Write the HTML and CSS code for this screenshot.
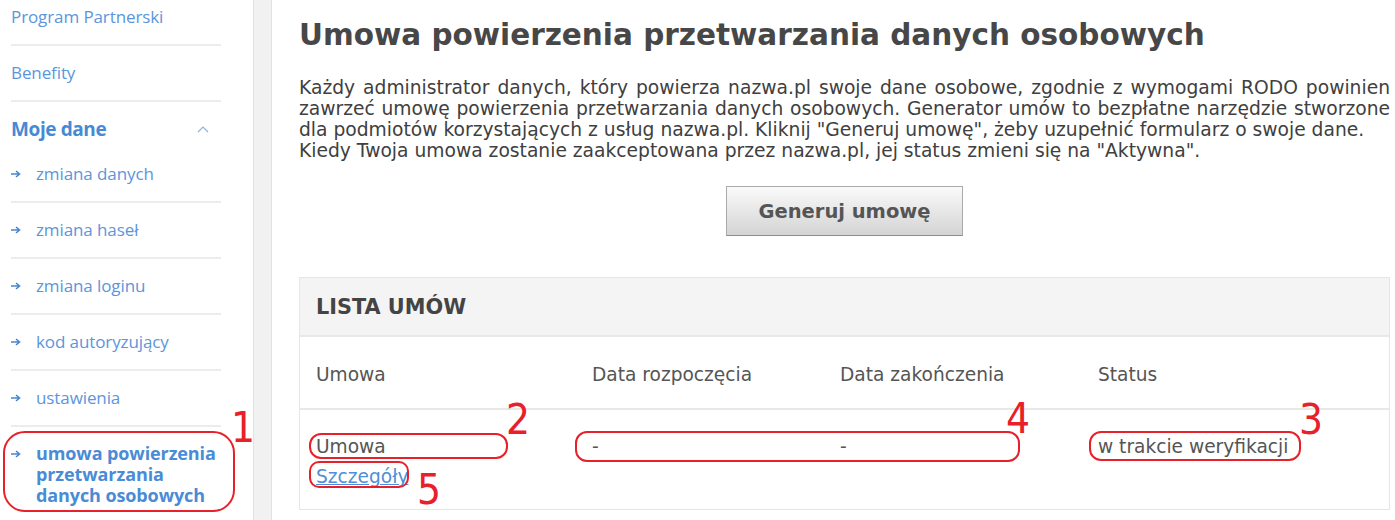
FILE: index.html
```html
<!DOCTYPE html>
<html lang="pl">
<head>
  <meta charset="UTF-8">
  <title>Umowa powierzenia przetwarzania danych osobowych</title>
  <link rel="stylesheet" href="styles.css">
</head>
<body>
  <div class="page">
    <!-- Menu boczne -->
    <aside class="sidebar">
      <a class="nav-item nav-first" href="#">Program Partnerski</a>
      <a class="nav-item" href="#">Benefity</a>
      <div class="nav-group">
        <div class="nav-group-title">
          <span>Moje dane</span>
          <svg class="chevron" width="12" height="8" viewBox="0 0 12 8"><polyline points="1,7 6,2 11,7" fill="none" stroke="#8fb2dc" stroke-width="1.2"/></svg>
        </div>
        <a class="nav-sub nav-sub-first" href="#"><svg class="arrow" width="10" height="8" viewBox="0 0 10 8"><path d="M0 4H8M5 1L8.5 4L5 7" fill="none" stroke="#4a88d0" stroke-width="1.6"/></svg>zmiana danych</a>
      </div>
      <a class="nav-sub" href="#"><svg class="arrow" width="10" height="8" viewBox="0 0 10 8"><path d="M0 4H8M5 1L8.5 4L5 7" fill="none" stroke="#4a88d0" stroke-width="1.6"/></svg>zmiana haseł</a>
      <a class="nav-sub" href="#"><svg class="arrow" width="10" height="8" viewBox="0 0 10 8"><path d="M0 4H8M5 1L8.5 4L5 7" fill="none" stroke="#4a88d0" stroke-width="1.6"/></svg>zmiana loginu</a>
      <a class="nav-sub" href="#"><svg class="arrow" width="10" height="8" viewBox="0 0 10 8"><path d="M0 4H8M5 1L8.5 4L5 7" fill="none" stroke="#4a88d0" stroke-width="1.6"/></svg>kod autoryzujący</a>
      <a class="nav-sub" href="#"><svg class="arrow" width="10" height="8" viewBox="0 0 10 8"><path d="M0 4H8M5 1L8.5 4L5 7" fill="none" stroke="#4a88d0" stroke-width="1.6"/></svg>ustawienia</a>
      <a class="nav-sub nav-active" href="#"><svg class="arrow" width="10" height="8" viewBox="0 0 10 8"><path d="M0 4H8M5 1L8.5 4L5 7" fill="none" stroke="#4a88d0" stroke-width="1.6"/></svg><span>umowa powierzenia przetwarzania danych osobowych</span></a>
    </aside>

    <div class="divider"></div>

    <!-- Zawartość strony -->
    <main class="content">
      <h1 class="title">Umowa powierzenia przetwarzania danych osobowych</h1>
      <p class="intro">Każdy administrator danych, który powierza nazwa.pl swoje dane osobowe, zgodnie z wymogami RODO powinien zawrzeć umowę powierzenia przetwarzania danych osobowych. Generator umów to bezpłatne narzędzie stworzone dla podmiotów korzystających z usług nazwa.pl. Kliknij "Generuj umowę", żeby uzupełnić formularz o swoje dane.<br>Kiedy Twoja umowa zostanie zaakceptowana przez nazwa.pl, jej status zmieni się na "Aktywna".</p>

      <div class="actions">
        <button class="generate-btn" type="button">Generuj umowę</button>
      </div>

      <section class="contracts">
        <h2 class="contracts-title">LISTA UMÓW</h2>
        <div class="contracts-grid contracts-head">
          <div>Umowa</div>
          <div>Data rozpoczęcia</div>
          <div>Data zakończenia</div>
          <div>Status</div>
        </div>
        <div class="contracts-grid contracts-row">
          <div>
            <div>Umowa</div>
            <a class="details-link" href="#">Szczegóły</a>
          </div>
          <div>-</div>
          <div>-</div>
          <div>w trakcie weryfikacji</div>
        </div>
      </section>
    </main>

    <!-- Oznaczenia na zrzucie -->
    <div class="mark mark-1"></div>
    <div class="mark mark-2"></div>
    <div class="mark mark-3"></div>
    <div class="mark mark-4"></div>
    <div class="mark mark-5"></div>
    <span class="mark-num num-1">1</span>
    <span class="mark-num num-2">2</span>
    <span class="mark-num num-3">3</span>
    <span class="mark-num num-4">4</span>
    <span class="mark-num num-5">5</span>
  </div>
</body>
</html>
```

FILE: styles.css
```css
body {
  margin: 0;
  font-family: "DejaVu Sans", Verdana, sans-serif;
  color: #444;
  background: #fff;
}

.page {
  position: relative;
  display: flex;
  height: 520px;
  overflow: hidden;
}

/* Menu boczne */
.sidebar {
  width: 253px;
  flex: none;
  box-sizing: border-box;
  padding: 0 32px 0 11px;
  font-family: "Open Sans", sans-serif;
  font-size: 17px;
  letter-spacing: -0.1px;
}

.sidebar a {
  text-decoration: none;
}

.nav-item,
.nav-sub,
.nav-group {
  display: flex;
  align-items: center;
  padding: 16px 0;
  line-height: 22px;
  border-bottom: 2px solid #ececec;
  color: #5b96dc;
}

.nav-first {
  padding-top: 6px;
}

.nav-group {
  display: block;
}

.nav-group-title {
  display: flex;
  align-items: center;
  justify-content: space-between;
  padding-right: 12px;
  font-size: 19px;
  font-weight: bold;
  letter-spacing: -0.4px;
  color: #4689d4;
}

.nav-group .nav-sub {
  padding: 0;
  margin-top: 23px;
  border-bottom: none;
}

.arrow {
  flex: none;
  margin-right: 15px;
}

.nav-active {
  align-items: flex-start;
  line-height: 21px;
  font-size: 18px;
  font-weight: bold;
  color: #4a8bd6;
}

.nav-active .arrow {
  margin-top: 7px;
}

.divider {
  width: 19px;
  flex: none;
  box-sizing: border-box;
  background: #f1f1f1;
  border-left: 1px solid #e2e2e2;
  border-right: 1px solid #e2e2e2;
}

/* Zawartość */
.content {
  flex: 1;
  padding: 0 5px 0 27px;
}

.title {
  margin: 18px 0 0;
  font-size: 29.5px;
  line-height: 34px;
  color: #474747;
}

.intro {
  margin: 25px 0 0;
  font-size: 18.7px;
  line-height: 21px;
  text-align: justify;
  color: #404040;
}

.actions {
  display: flex;
  justify-content: center;
  margin-top: 25px;
}

.generate-btn {
  width: 237px;
  height: 50px;
  border: 1px solid #aaa;
  border-bottom-color: #8e8e8e;
  background: linear-gradient(#fafafa, #d4d4d4);
  font-family: "DejaVu Sans", Verdana, sans-serif;
  font-size: 19.5px;
  font-weight: bold;
  color: #555;
}

.contracts {
  margin-top: 41px;
  border: 1px solid #e6e6e6;
}

.contracts-title {
  margin: 0;
  padding: 18px 16px 16px;
  background: #f4f4f4;
  border-bottom: 2px solid #e8e8e8;
  font-size: 20.8px;
  line-height: 23px;
  color: #444;
}

.contracts-grid {
  display: grid;
  grid-template-columns: 276px 248px 258px 1fr;
  padding: 0 16px;
  font-size: 18.6px;
  line-height: 22px;
  color: #555;
}

.contracts-head {
  padding-top: 27px;
  padding-bottom: 22px;
  border-bottom: 2px solid #e8e8e8;
}

.contracts-row {
  padding-top: 22px;
  padding-bottom: 17px;
  line-height: 30px;
}

.details-link {
  color: #4d8fd8;
}

/* Oznaczenia */
.mark {
  position: absolute;
  border: 2px solid #e8202a;
  border-radius: 12px;
}

.mark-1 { left: 3px; top: 431px; width: 228px; height: 77px; border-radius: 22px; }
.mark-2 { left: 309px; top: 433px; width: 195px; height: 22px; }
.mark-3 { left: 1089px; top: 431px; width: 208px; height: 26px; }
.mark-4 { left: 575px; top: 431px; width: 441px; height: 27px; }
.mark-5 { left: 309px; top: 461px; width: 96px; height: 23px; border-radius: 10px; }

.mark-num {
  position: absolute;
  font-family: "DejaVu Sans Condensed", "DejaVu Sans", sans-serif;
  font-size: 42px;
  line-height: 42px;
  color: #e8202a;
}

.num-1 { left: 231px; top: 407px; }
.num-2 { left: 506px; top: 399px; }
.num-3 { left: 1299px; top: 399px; }
.num-4 { left: 1006px; top: 398px; }
.num-5 { left: 417px; top: 469px; }
```
